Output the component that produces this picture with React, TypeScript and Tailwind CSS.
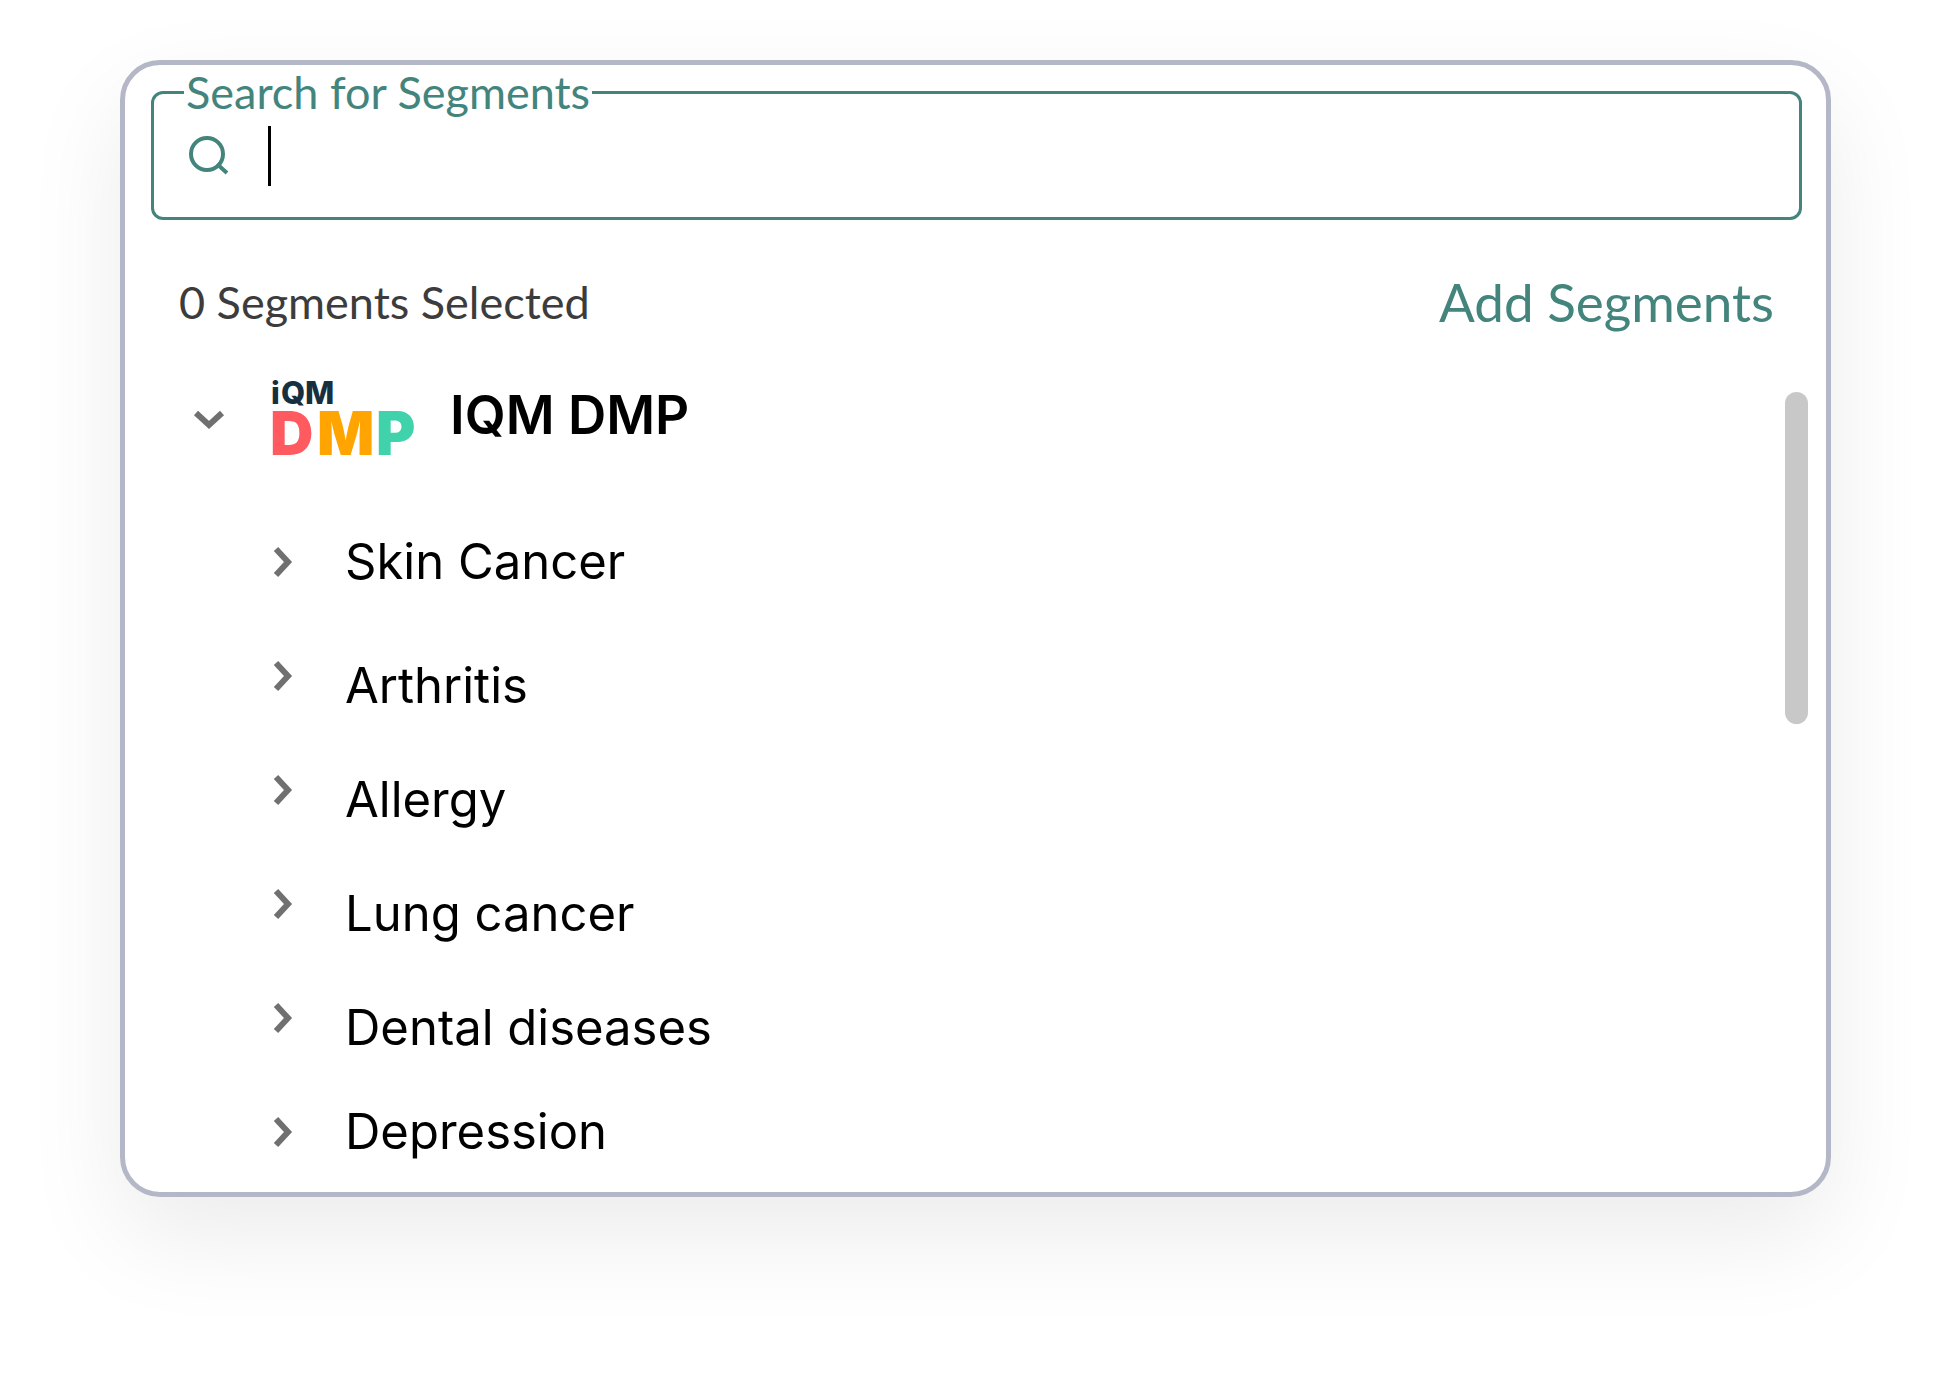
import { useState } from 'react';
import { clsx } from 'clsx';

type Segment = { name: string; align: 'center' | 'end' };

const segments: Segment[] = [
  { name: 'Skin Cancer', align: 'center' },
  { name: 'Arthritis', align: 'end' },
  { name: 'Allergy', align: 'end' },
  { name: 'Lung cancer', align: 'end' },
  { name: 'Dental diseases', align: 'end' },
  { name: 'Depression', align: 'center' },
];

export default function App() {
  const [query, setQuery] = useState('');

  return (
    <main className="min-h-screen bg-white px-[120px] pt-[60px] pb-[180px] font-['Inter',sans-serif] text-black">
      <section className="rounded-[40px] border-[5px] border-[#b4b8c6] bg-white pt-[3px] pr-6 pb-5 pl-[26px] shadow-[0_40px_100px_rgba(0,0,0,0.08)]">
        {/* Search field */}
        <fieldset className="rounded-xl border-[3px] border-[#43857c] pl-[30px] font-['Lato',sans-serif]">
          <legend className="px-[2px] text-[45px] leading-[48px] text-[#43857c]">
            <label htmlFor="segment-search">Search for Segments</label>
          </legend>
          <div className="flex h-[101px] items-center pb-[22px]">
            <SearchIcon />
            <span className="ml-9 h-[60px] w-[3px] bg-black" />
            <input
              id="segment-search"
              type="text"
              value={query}
              onChange={(e) => setQuery(e.target.value)}
              className="h-[60px] min-w-0 flex-1 bg-transparent px-2 text-[45px] outline-none"
            />
          </div>
        </fieldset>

        {/* Selection summary */}
        <div className="mt-[52px] flex h-[60px] items-center justify-between pr-7 pl-7 font-['Lato',sans-serif]">
          <p className="text-[45px] leading-[60px] text-[#3c3c3c]">0 Segments Selected</p>
          <button type="button" className="text-[53px] leading-[60px] text-[#43857c]">Add Segments</button>
        </div>

        {/* Segment tree */}
        <div className="mt-[31px] flex items-start">
          <div className="min-w-0 flex-1">
            <button type="button" aria-expanded="true" className="flex h-[112px] items-center pl-[42px]">
              <Chevron down />
              <span className="ml-[47px]"><DmpLogo /></span>
              <span className="ml-8 pb-2 text-[53px] leading-[60px] font-semibold">IQM DMP</span>
            </button>
            <ul className="mt-[47px] flex flex-col gap-[34px] pl-[116px]">
              {segments.map((s) => (
                <li key={s.name}>
                  <button type="button" aria-expanded="false" className="flex h-20 items-center gap-[46px]">
                    <Chevron />
                    <span className={clsx('text-[49px] leading-[60px]', s.align === 'end' ? 'self-end' : 'self-center')}>
                      {s.name}
                    </span>
                  </button>
                </li>
              ))}
            </ul>
          </div>
          <div className="mt-[29px] mr-[-6px] h-[332px] w-[23px] rounded-full bg-[#c8c8c8]" />
        </div>
      </section>
    </main>
  );
}

function SearchIcon() {
  return (
    <svg width="48" height="48" viewBox="0 0 48 48" fill="none" stroke="#43857c" strokeWidth="4" aria-hidden="true">
      <circle cx="23" cy="22" r="16" />
      <path d="M33 32l10 9" />
    </svg>
  );
}

function Chevron({ down }: { down?: boolean }) {
  return (
    <svg width="32" height="32" viewBox="0 0 32 32" fill="none" stroke="#707070" strokeWidth="6" aria-hidden="true">
      {down ? <path d="M3 10l13 12 13-12" /> : <path d="M9 3l12 13L9 29" />}
    </svg>
  );
}

function DmpLogo() {
  return (
    <svg width="146" height="78" viewBox="0 0 146 78" className="overflow-visible font-['Inter',sans-serif]" role="img" aria-label="IQM DMP logo">
      <g fill="#17303f" fontSize="31" fontWeight="800">
        <text x="-1" y="24">i</text>
        <text x="9" y="24">Q</text>
        <text x="33" y="24">M</text>
      </g>
      <g fontSize="60" fontWeight="900">
        <text x="-2" y="75" fill="#ff5a5f">D</text>
        <text x="45" y="75" fill="#ffa400">M</text>
        <text x="104" y="75" fill="#40d3ab">P</text>
      </g>
    </svg>
  );
}
